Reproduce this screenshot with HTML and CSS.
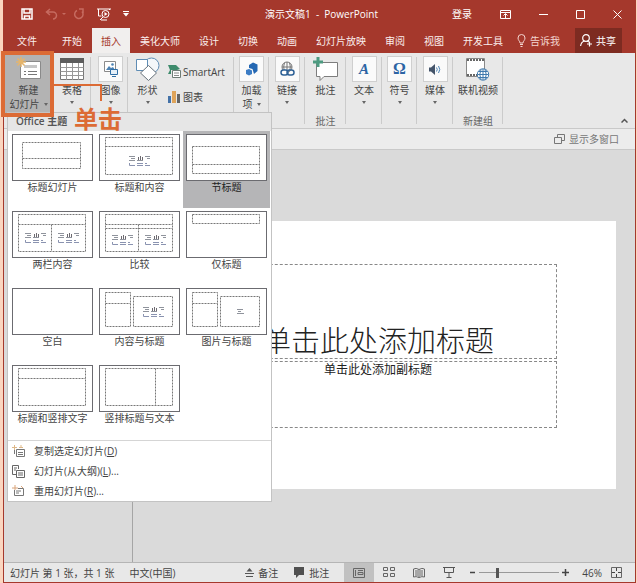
FILE: index.html
```html
<!DOCTYPE html>
<html lang="zh-CN">
<head>
<meta charset="utf-8">
<title>演示文稿1 - PowerPoint</title>
<link rel="stylesheet" href="styles.css">
</head>
<body>
<svg class="defs" aria-hidden="true">
  <symbol id="content" viewBox="0 0 24 12">
    <path d="M1 1.500h6M3 3.500h4M1 5.500h6M17 1.500h5M19 3.500h3M9 5.500h6" fill="none" stroke="#8f939c"/>
    <path d="M10.500 2v3M12.500 1v4M14.500 2v3" stroke="#6d6a70" fill="none"/>
    <path d="M1.500 8v2.500H7M9 8.500h6M9 10.500h6M17 8.500h2M17 10.500h5" fill="none" stroke="#8a93b0"/>
  </symbol>
</svg>
<div class="window">
  <header class="titlebar">
    <div class="quick">
      <button class="bare" aria-label="保存"><svg width="12" height="12" viewBox="0 0 12 12"><path d="M1 1h10v10H1zM3 1v4h6V1M3.500 11V8h5v3" fill="none" stroke="#fff" stroke-width="1.500"/></svg></button>
      <button class="bare undo" aria-label="撤消"><svg width="22" height="12" viewBox="0 0 22 12"><path d="M5 1L1.500 4 5 7M2 4h6a3 3 0 0 1 0 7" fill="none" stroke="#c66b60" stroke-width="1.500"/><path d="M17 5h4l-2 2z" fill="#c66b60"/></svg></button>
      <button class="bare redo" aria-label="重复"><svg width="12" height="12" viewBox="0 0 12 12"><path d="M4 2.500a4.200 4.200 0 1 0 5 1M6 1h4v4" fill="none" stroke="#c66b60" stroke-width="1.500"/></svg></button>
      <button class="bare" aria-label="从头开始放映"><svg width="14" height="13" viewBox="0 0 14 13"><path d="M0 1h14M1.500 1v7h3M12.500 1v1M3 12l3-3M4 12h6" fill="none" stroke="#fff"/><circle cx="8.500" cy="6" r="3.500" fill="none" stroke="#fff"/><path d="M7.500 4v4l3-2z" fill="#fff"/></svg></button>
      <button class="bare" aria-label="自定义快速访问工具栏"><svg width="6" height="6" viewBox="0 0 6 6"><path d="M0 .5h6" stroke="#fff"/><path d="M0 2h6L3 5.500z" fill="#fff"/></svg></button>
    </div>
    <h1>演示文稿1&nbsp; -&nbsp; PowerPoint</h1>
    <div class="caption">
      <button class="bare">登录</button>
      <button class="bare ribbon-opt" aria-label="功能区显示选项"><svg width="11" height="9" viewBox="0 0 11 9"><path d="M.5.5h10v8H.5zM.5 2.500h10M5.500 8V4M3.500 5.500l2-2 2 2" fill="none" stroke="#fff"/></svg></button>
      <button class="bare" aria-label="最小化"><svg width="9" height="9" viewBox="0 0 9 9"><path d="M0 4.500h9" stroke="#fff"/></svg></button>
      <button class="bare" aria-label="最大化"><svg width="9" height="9" viewBox="0 0 9 9"><path d="M.5.5h8v8h-8z" fill="none" stroke="#fff"/></svg></button>
      <button class="bare" aria-label="关闭"><svg width="9" height="9" viewBox="0 0 9 9"><path d="M.5.5l8 8M8.500.5l-8 8" stroke="#fff"/></svg></button>
    </div>
  </header>

  <nav class="tabs">
    <button class="file">文件</button>
    <button>开始</button>
    <button class="active">插入</button>
    <button>美化大师</button>
    <button>设计</button>
    <button>切换</button>
    <button>动画</button>
    <button>幻灯片放映</button>
    <button>审阅</button>
    <button>视图</button>
    <button>开发工具</button>
    <button class="tell"><svg width="9" height="13" viewBox="0 0 9 13"><path d="M3 9C3 7 1 6.500 1 4a3.500 3.500 0 0 1 7 0c0 2.500-2 3-2 5zM3 10.500h3M3.500 12.500h2" fill="none" stroke="#f3d5d0"/></svg>告诉我</button>
    <button class="share"><svg width="13" height="13" viewBox="0 0 13 13"><circle cx="6" cy="4" r="3.300" fill="none" stroke="#fff" stroke-width="1.200"/><path d="M.6 12c.4-3 2-4.500 4-5M7 7l2 1M9.500 7.500v5M7 10h5" fill="none" stroke="#fff" stroke-width="1.200"/></svg>共享</button>
  </nav>

  <section class="ribbon">
    <div class="group g-new">
      <button class="big pressed" aria-expanded="true"><span class="ico"><svg width="26" height="24" viewBox="0 0 26 24"><path d="M4.500 4.500h20v17h-20z" fill="#fff" stroke="#8a8a8a"/><path d="M8 8h13v3H8z" fill="#c7c7c7"/><path d="M8 14.500h2M12 14.500h9M8 17.500h2M12 17.500h9" stroke="#777"/><path d="M5 0v10M0 5h10M1.500 1.500l7 7M8.500 1.500l-7 7" stroke="#e6b56c" stroke-width="1.500"/></svg></span>新建<span class="row">幻灯片<i class="arrow"></i></span></button>
    </div>
    <div class="group g-table sep">
      <button class="big"><span class="ico"><svg width="24" height="22" viewBox="0 0 24 22"><path d="M.5.5h23v21H.5z" fill="#fff" stroke="#777"/><path d="M0 0h24v5H0z" fill="#5d5d5d"/><path d="M.5 9.500h23M.5 13.500h23M.5 17.500h23M6.500 5v17M12.500 5v17M18.500 5v17" stroke="#999"/></svg></span>表格<i class="arrow"></i></button>
    </div>
    <div class="group g-image sep">
      <button class="big"><span class="ico box"><svg width="15" height="16" viewBox="0 0 15 16"><path d="M1.500.5h11v10h-11z" fill="#fff" stroke="#8a8a8a"/><path d="M3 9l3-4 2 2 2-1 2 3z" fill="#4b82b4"/><circle cx="9.500" cy="3.500" r="1.300" fill="#4b82b4"/><path d="M7.500 8.500h7v5h-7zM9 15.500h4" fill="#e4eff8" stroke="#2e6da4"/></svg></span>图像<i class="arrow"></i></button>
    </div>
    <div class="group g-shape sep">
      <button class="big"><span class="ico"><svg width="25" height="25" viewBox="0 0 25 25"><circle cx="16.500" cy="8.500" r="7.500" fill="#f4f7fa" stroke="#5f8db5"/><path d="M1.500 2.500h11v11h-11z" fill="#fff" stroke="#5f8db5"/><path d="M13.500 8.500l8 7.500-8 7.500-8-7.500z" fill="#fff" stroke="#68737c"/></svg></span>形状<i class="arrow"></i></button>
      <div class="stack">
        <button class="small"><svg width="13" height="13" viewBox="0 0 13 13"><path d="M0 0h8l4 4-3 1H3v4H0l2-4z" fill="#3e8b6c"/><path d="M4.500 5.500h8v7h-8z" fill="#fff" stroke="#6f7c76"/><path d="M6 8h5M6 10.500h5" stroke="#8a8a8a"/></svg>SmartArt</button>
        <button class="small"><svg width="13" height="12" viewBox="0 0 13 12"><path d="M0 5h3v7H0z" fill="#4472a8"/><path d="M4 0h4v12H4z" fill="#dfa45a"/><path d="M9 3h3v9H9z" fill="#646464"/></svg>图表</button>
      </div>
    </div>
    <div class="group g-std sep">
      <button class="big"><span class="ico box"><svg width="14" height="14" viewBox="0 0 14 14"><path d="M4 3l4-2.500 4.500 2V9L9 12l-1.500-5L4 6z" fill="#2467b2"/><path d="M1 8l3-1 3 1.500V12l-3 1.500L1 12z" fill="#3b7cc4"/></svg></span>加载<span class="row">项<i class="arrow"></i></span></button>
    </div>
    <div class="group g-wide sep">
      <button class="big"><span class="ico box"><svg width="15" height="16" viewBox="0 0 15 16"><circle cx="7" cy="6" r="5" fill="none" stroke="#777"/><path d="M2 6h10M7 1v10M4.500 2c-1 3-1 5 0 8M9.500 2c1 3 1 5 0 8" fill="none" stroke="#777"/><rect x="1" y="9" width="7" height="5" rx="2.500" fill="#fff" stroke="#2e6196" stroke-width="1.500"/><rect x="7" y="9" width="7" height="5" rx="2.500" fill="none" stroke="#2e6196" stroke-width="1.500"/></svg></span>链接<i class="arrow"></i></button>
    </div>
    <div class="group g-note sep">
      <button class="big"><span class="ico"><svg width="25" height="25" viewBox="0 0 25 25"><path d="M3.500 5.500h21v14H11l-4 4v-4H3.500z" fill="#fff" stroke="#7d7d7d"/><path d="M5 0v10M0 5h10" stroke="#4d9a80" stroke-width="3"/></svg></span>批注</button>
      <span class="caption-text">批注</span>
    </div>
    <div class="group g-wide sep">
      <button class="big"><span class="ico box glyph-a">A</span>文本<i class="arrow"></i></button>
    </div>
    <div class="group g-std sep">
      <button class="big"><span class="ico box glyph-o">Ω</span>符号<i class="arrow"></i></button>
    </div>
    <div class="group g-wide sep">
      <button class="big"><span class="ico box"><svg width="12" height="11" viewBox="0 0 12 11"><path d="M0 3.500h2L6 0v11L2 7.500H0z" fill="#44546a"/><path d="M7.500 3.500q1.500 2 0 4M9.500 2q2.500 3.500 0 7" fill="none" stroke="#4b82b4"/></svg></span>媒体<i class="arrow"></i></button>
    </div>
    <div class="group g-video sep">
      <button class="big"><span class="ico"><svg width="24" height="24" viewBox="0 0 24 24"><path d="M.5 1.500h18v18H.5z" fill="#fff" stroke="#888"/><path d="M1 3h17M1 18h17" stroke="#666" stroke-width="2" stroke-dasharray="2 1"/><circle cx="17" cy="17.500" r="5.700" fill="#fff" stroke="#3e78ac"/><path d="M11.500 17.500h11M17 12v11M12.500 14.500h9M12.500 20.500h9M15 12.500q-2.500 5 0 10M19 12.500q2.500 5 0 10" fill="none" stroke="#3e78ac"/></svg></span>联机视频</button>
      <span class="caption-text">新建组</span>
    </div>
    <button class="bare collapse" aria-label="折叠功能区"><svg width="7" height="5" viewBox="0 0 7 5"><path d="M.5 4.500l3-3 3 3" fill="none" stroke="#555" stroke-width="1.500"/></svg></button>
  </section>

  <div class="subbar">
    <button class="bare"><svg width="11" height="10" viewBox="0 0 11 10"><path d="M3.500 3V.5h7v6H8M.5 3.500h7v6h-7z" fill="none" stroke="#777"/></svg>显示多窗口</button>
  </div>

  <main class="work">
    <aside class="thumbs"></aside>
    <div class="stage">
      <article class="slide">
        <h2 class="holder title">单击此处添加标题</h2>
        <p class="holder subtitle">单击此处添加副标题</p>
      </article>
    </div>
  </main>

  <footer class="status">
    <span>幻灯片 第 1 张，共 1 张</span>
    <span class="lang">中文(中国)</span>
    <div class="tools">
      <button class="bare"><svg width="9" height="9" viewBox="0 0 9 9"><path d="M1.500 3.500l3-3.500 3 3.500z" fill="#555"/><path d="M0 5.500h9M1 8.500h7" stroke="#555"/></svg>备注</button>
      <button class="bare notes"><svg width="12" height="11" viewBox="0 0 12 11"><path d="M1 0h10v8H6l-3 3V8H1z" fill="#505050"/></svg>批注</button>
      <button class="view on" aria-label="普通视图"><svg width="12" height="10" viewBox="0 0 12 10"><path d="M.5.5h11v9H.5zM2.500 2v6M5 2.500h5M5 4.500h5v2H5z" fill="none" stroke="#666"/></svg></button>
      <button class="view" aria-label="幻灯片浏览"><svg width="12" height="11" viewBox="0 0 12 11"><path d="M.5.5h4v3h-4zM7.500.5h4v3h-4zM.5 6.500h4v3h-4zM7.500 6.500h4v3h-4z" fill="none" stroke="#666"/></svg></button>
      <button class="view" aria-label="阅读视图"><svg width="12" height="10" viewBox="0 0 12 10"><path d="M6 1.500Q3-.5.5 1v8q2.500-1 5.500.5 3-1.500 5.500-.5V1Q9-.5 6 1.500v8M2 3h3M2 5h3M2 7h3M7 3h3M7 5h3M7 7h3" fill="none" stroke="#666"/></svg></button>
      <button class="view" aria-label="幻灯片放映"><svg width="12" height="11" viewBox="0 0 12 11"><path d="M0 .5h12M1.500.5v5h9v-5M6 6v4M3.500 10.500h5" fill="none" stroke="#555"/></svg></button>
      <button class="bare zoom-step" aria-label="缩小"><svg width="7" height="7" viewBox="0 0 7 7"><path d="M1 3.500h5" stroke="#444" stroke-width="1.500"/></svg></button>
      <input class="zoom" type="range" min="10" max="200" value="50" aria-label="显示比例">
      <button class="bare zoom-step" aria-label="放大"><svg width="7" height="7" viewBox="0 0 7 7"><path d="M0 3.500h7M3.500 0v7" stroke="#444" stroke-width="1.500"/></svg></button>
      <span class="percent">46%</span>
      <button class="bare fit" aria-label="适应窗口"><svg width="11" height="11" viewBox="0 0 11 11"><path d="M.5.5h10v10H.5z" fill="none" stroke="#666"/><path d="M5.500 1v3M5.500 7v3M1 5.500h3M7 5.500h3" stroke="#444"/></svg></button>
    </div>
  </footer>

  <div class="gallery" role="menu" aria-label="Office 主题">
    <h3>Office 主题</h3>
    <div class="layouts">
      <button><svg viewBox="0 0 79 45"><path d="M9.500 7.500h58v26h-58zM9.500 23.500h58"/></svg>标题幻灯片</button>
      <button><svg viewBox="0 0 79 45"><path d="M5.500 2.500h67v37h-67zM5.500 11.500h67"/><use href="#content" x="28" y="20" width="24" height="12"/></svg>标题和内容</button>
      <button class="selected"><svg viewBox="0 0 79 45"><path d="M5.500 11.500h67v27h-67zM5.500 29.500h67"/></svg>节标题</button>
      <button><svg viewBox="0 0 79 45"><path d="M5.500 2.500h67v37h-67zM5.500 12.500h67M38.500 12.500v27"/><use href="#content" x="11" y="20" width="24" height="12"/><use href="#content" x="44" y="20" width="24" height="12"/></svg>两栏内容</button>
      <button><svg viewBox="0 0 79 45"><path d="M5.500 2.500h67v37h-67zM5.500 12.500h67M5.500 16.500h67M38.500 12.500v27"/><use href="#content" x="11" y="22" width="24" height="12"/><use href="#content" x="44" y="22" width="24" height="12"/></svg>比较</button>
      <button><svg viewBox="0 0 79 45"><path d="M5.500 2.500h67v9h-67z"/></svg>仅标题</button>
      <button><svg viewBox="0 0 79 45"></svg>空白</button>
      <button><svg viewBox="0 0 79 45"><path d="M5.500 3.500h25v34h-25zM5.500 14.500h25M33.500 7.500h39v30h-39z"/><use href="#content" x="42" y="17" width="24" height="12"/></svg>内容与标题</button>
      <button><svg viewBox="0 0 79 45"><path d="M5.500 3.500h25v34h-25zM5.500 14.500h25M33.500 7.500h39v30h-39z"/><path class="pic" d="M50 20.500h6M51 22.500h3M50 24.500h7"/></svg>图片与标题</button>
      <button><svg viewBox="0 0 79 45"><path d="M5.500 2.500h67v37h-67zM5.500 12.500h67"/></svg>标题和竖排文字</button>
      <button><svg viewBox="0 0 79 45"><path d="M5.500 2.500h67v37h-67zM55.500 2.500v37"/></svg>竖排标题与文本</button>
    </div>
    <div class="commands">
      <button><svg width="13" height="12" viewBox="0 0 13 12"><path d="M4.500 4.500h8v7h-8zM2.500 9V5M6 7.500h5M6 9.500h5" fill="none" stroke="#777"/><path d="M0 2.500h5M2.500 0v5M7 2.500h4M9 0v3" stroke="#dfb98a"/></svg><span>复制选定幻灯片(<u>D</u>)</span></button>
      <button><svg width="13" height="13" viewBox="0 0 13 13"><path d="M4 9.500H.5v-9h6V4M2 3h3M2 5h2M4.500 5.500h8v7h-8zM6 8h5M6 10h5" fill="none" stroke="#666"/></svg><span>幻灯片(从大纲)(<u>L</u>)...</span></button>
      <button><svg width="13" height="12" viewBox="0 0 13 12"><path d="M2.500 5v5.500h9v-7H6M4 6h5M4 8h3" fill="none" stroke="#777"/><path d="M0 3h6M3 0v5M9 1l2 2" stroke="#d9a47a"/></svg><span>重用幻灯片(<u>R</u>)...</span></button>
    </div>
  </div>

  <div class="mark-box"></div>
  <div class="mark-line"></div>
  <strong class="mark-text">单击</strong>
</div>
</body>
</html>
```
FILE: styles.css
```css
* { box-sizing: border-box; }
body {
  margin: 0;
  min-height: 100vh;
  padding: 0 1px 0 3px;
  background: #fbd5bf;
  color: #444;
  font: 10px/12px "Open Sans", "Noto Sans CJK SC", sans-serif;
}
h1, h2, h3, p { margin: 0; font-weight: 400; }
button {
  margin: 0;
  padding: 0;
  border: 0;
  background: none;
  color: inherit;
  font: inherit;
  white-space: nowrap;
}
svg { display: block; flex: none; }
.defs { position: absolute; width: 0; height: 0; }
.bare { display: flex; align-items: center; gap: 4px; }

.window {
  position: relative;
  display: flex;
  flex-direction: column;
  min-height: 100vh;
  border: 1px solid #a5382c;
  border-top: 0;
  background: #dadada;
}

/* title bar */
.titlebar {
  display: grid;
  grid-template-columns: 1fr auto 1fr;
  align-items: center;
  height: 28px;
  padding: 0 13px 0 17px;
  background: #a5382c;
  color: #fff;
}
.titlebar h1 { font-size: 10px; }
.quick { display: flex; align-items: center; gap: 12px; }
.redo { margin-left: -6px; }
.caption { display: flex; align-items: center; justify-content: flex-end; gap: 28px; }

/* tabs */
.tabs {
  display: flex;
  gap: 1px;
  height: 25px;
  padding: 0 13px 0 4px;
  background: #a5382c;
  color: #fbeeec;
}
.tabs button { padding: 0 9px; }
.tabs .file { margin-right: 6px; }
.tabs .active { background: #f1efee; color: #a5382c; }
.tabs .tell { display: flex; align-items: center; gap: 4px; padding: 0 4px; color: #f3d5d0; }
.tabs .share {
  display: flex;
  align-items: center;
  gap: 3px;
  margin-left: auto;
  padding: 0 6px 0 5px;
  background: #7d2b21;
  color: #fff;
}

/* ribbon */
.ribbon {
  display: flex;
  height: 76px;
  padding-bottom: 1px;
  border-bottom: 1px solid #c9c9c9;
  background: #e8e8e8;
}
.group {
  position: relative;
  display: flex;
  flex-wrap: wrap;
  align-content: flex-start;
  justify-content: center;
}
.sep::after {
  content: "";
  position: absolute;
  top: 4px;
  right: 0;
  bottom: 3px;
  width: 1px;
  background: #cbcbcb;
}
.g-new { width: 49px; }
.g-table { width: 38px; margin-right: 2px; }
.g-image { width: 35px; }
.g-shape { width: 106px; flex-wrap: nowrap; justify-content: flex-start; gap: 8px; padding-left: 7px; }
.g-std { width: 35px; }
.g-wide { width: 36px; }
.g-note { width: 41px; }
.g-video { width: 50px; }
.big {
  display: flex;
  flex-direction: column;
  align-items: center;
  height: 60px;
  padding-top: 3px;
}
.pressed { width: 100%; background: #b3b3b3; }
.ico {
  display: flex;
  align-items: center;
  justify-content: center;
  height: 26px;
  margin-bottom: 2px;
}
.box { width: 25px; border: 1px solid #cfcfcf; background: #fafafa; }
.glyph-a { color: #2c64a4; font: italic bold 15px/20px "Liberation Serif", serif; }
.glyph-o { color: #2c64a4; font: bold 16px/20px "Liberation Serif", serif; }
.row { display: flex; align-items: center; gap: 4px; margin-top: 2px; }
.arrow {
  width: 0;
  height: 0;
  border: 2px solid transparent;
  border-top: 3px solid #666;
  border-bottom: 0;
}
.big > .arrow { margin-top: 5px; }
.stack { display: flex; flex-direction: column; gap: 13px; padding-top: 12px; }
.small { display: flex; align-items: center; gap: 2px; }
.caption-text { width: 100%; padding-top: 2px; color: #666; text-align: center; }
.collapse { align-self: flex-end; margin: 0 7px 4px auto; }

.subbar {
  display: flex;
  justify-content: flex-end;
  height: 21px;
  padding-right: 16px;
  border-bottom: 1px solid #c9c9c9;
  background: #ececec;
  color: #777;
}

/* editing area */
.work { flex: 1; display: flex; border-bottom: 1px solid #b5b5b5; }
.thumbs { width: 129px; border-right: 1px solid #a5a5a5; }
.stage { flex: 1; padding: 71px 19px 0 7px; }
.slide {
  display: grid;
  grid-template-rows: 43fr 95fr 2fr 67fr 60fr;
  justify-items: center;
  aspect-ratio: 475 / 267;
  background: #fff;
}
.holder { width: 75%; border: 1px dashed #888; color: #222; text-align: center; }
.title {
  grid-row: 2;
  display: flex;
  align-items: flex-end;
  justify-content: center;
  font: 300 29px/38px "Noto Sans CJK SC", sans-serif;
}
.subtitle { grid-row: 4; font-size: 12px; line-height: 16px; }

/* status bar */
.status {
  display: flex;
  align-items: center;
  height: 19px;
  padding-left: 6px;
  background: #e8e8e8;
}
.lang { margin-left: 15px; }
.tools { display: flex; align-items: center; align-self: stretch; margin-left: auto; padding-right: 13px; }
.notes { margin: 0 15px; }
.view { display: grid; place-items: center; align-self: stretch; width: 30px; }
.on { background: #c1c1c1; }
.zoom-step { margin: 0 3px; }
.view + .zoom-step { margin-left: 5px; }
.zoom {
  width: 80px;
  height: 11px;
  margin: 0;
  appearance: none;
  background: linear-gradient(#999, #999) center / 100% 1px no-repeat;
}
.zoom::-webkit-slider-thumb { appearance: none; width: 3px; height: 10px; background: #555; }
.percent { margin: 0 9px 0 10px; }

/* layout gallery */
.gallery {
  position: absolute;
  z-index: 1;
  top: 112px;
  left: 3px;
  width: 265px;
  border: 1px solid #c3c3c3;
  background: #fff;
}
.gallery h3 {
  height: 18px;
  padding-left: 8px;
  background: #e6e6e6;
  font-size: 10px;
  font-weight: 600;
  line-height: 17px;
  color: #555;
}
.layouts {
  display: grid;
  grid-template-columns: repeat(3, 1fr);
  grid-auto-rows: 77px;
  padding: 0 1px 1px;
  border-bottom: 1px solid #d5d5d5;
}
.layouts button { padding: 3px; display: flex; flex-direction: column; align-items: center; }
.layouts svg {
  width: 100%;
  height: 47px;
  border: 1px solid #6b6b70;
  background: #fff;
}
.layouts path { fill: none; stroke: #777; stroke-dasharray: 2 1; }
.layouts .pic { stroke: #8f939c; stroke-dasharray: none; }
.layouts .selected { background: #b5b5b7; color: #222; }
.commands button { display: flex; align-items: center; gap: 9px; width: 100%; height: 20px; padding-left: 4px; }

/* callout */
.mark-box {
  position: absolute;
  z-index: 2;
  top: 51px;
  left: -3px;
  width: 53px;
  height: 66px;
  border: 4px solid #dc6b35;
}
.mark-line {
  position: absolute;
  z-index: 2;
  top: 84px;
  left: 49px;
  width: 49px;
  height: 17px;
  border: solid #dc6b35;
  border-width: 2px 2px 0 0;
}
.mark-text {
  position: absolute;
  z-index: 2;
  top: 104px;
  left: 70px;
  color: #dc6b35;
  font: bold 24px/28px "Noto Sans CJK SC", sans-serif;
}
```
